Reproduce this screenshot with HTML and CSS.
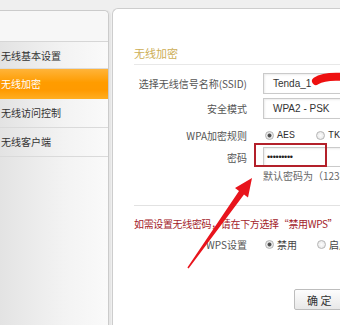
FILE: index.html
```html
<!DOCTYPE html>
<html lang="zh-CN">
<head>
    <meta charset="UTF-8">
    <title>无线加密</title>
    <link rel="stylesheet" href="styles.css">
</head>
<body>

<div class="page">
    <div class="sidebar">
        <div class="side-top"></div>
        <ul class="menu">
            <li>无线基本设置</li>
            <li class="current">无线加密</li>
            <li>无线访问控制</li>
            <li>无线客户端</li>
        </ul>
    </div>

    <div class="main">
        <h2 class="title">无线加密</h2>

        <div class="row">
            <label class="lbl">选择无线信号名称(SSID)</label>
            <div class="field"><span class="input">Tenda_1</span></div>
        </div>
        <div class="row">
            <label class="lbl">安全模式</label>
            <div class="field"><span class="input">WPA2 - PSK</span></div>
        </div>
        <div class="row row-radio">
            <label class="lbl">WPA加密规则</label>
            <div class="field">
                <span class="opt"><i class="radio on"></i><span class="latin">AES</span></span>
                <span class="opt"><i class="radio"></i><span class="latin">TKIP</span></span>
            </div>
        </div>
        <div class="row row-pwd">
            <label class="lbl">密码</label>
            <div class="field"><span class="input pwd">•••••••••</span></div>
        </div>
        <p class="hint">默认密码为（12345678）</p>

        <p class="warn">如需设置无线密码，请在下方选择“禁用WPS”</p>

        <div class="row row-wps">
            <label class="lbl">WPS设置</label>
            <div class="field">
                <span class="opt opt-wide"><i class="radio on"></i>禁用</span>
                <span class="opt"><i class="radio"></i>启用</span>
            </div>
        </div>

        <div class="actions">
            <button class="btn">确 定</button>
        </div>
    </div>
</div>

<!-- 截图上的红色标注 -->
<svg class="marks" width="340" height="325" viewBox="0 0 340 325">
    <path d="M316 81 C322 77, 331 76, 344 77" fill="none" stroke="#ee1010" stroke-width="8" stroke-linecap="round"/>
    <rect x="255" y="144" width="71" height="22" fill="none" stroke="#b3202a" stroke-width="2"/>
    <polygon points="252,178 248,197.5 244,194.5 188.6,268.4 187.4,267.6 239,191 235,188" fill="#e8141c"/>
</svg>

</body>
</html>
```

FILE: styles.css
```css
*{
    margin:0;
    padding:0;
    box-sizing: border-box;
}
html, body{
    overflow: hidden;
}
body{
    background: #efefef;
    font-family: "Noto Sans CJK SC", "Liberation Sans", sans-serif;
    font-size: 10px;
    color: #444;
}
li{
    list-style-type: none;
}
.page{
    display: flex;
    gap: 3px;
    width: 340px;
    height: 325px;
}

/* 左侧菜单 */
.sidebar{
    width: 109px;
    flex-shrink: 0;
    margin-top: 10px;
    background: linear-gradient(to right, #e3e3e3, #f3f3f3 60%, #fafafa);
    border: 1px solid #cbcbcb;
    border-left: 0;
    border-bottom: 0;
    border-radius: 0 5px 0 0;
    box-shadow: 2px 0 0 #e6e6e6;
}
.side-top{
    height: 31px;
    background: #f7f7f7;
    border-bottom: 1px solid #d6d6d6;
    border-radius: 0 5px 0 0;
}
.menu li{
    height: 29px;
    line-height: 28px;
    padding-left: 1px;
    color: #333;
    border-bottom: 1px solid #dadada;
    white-space: nowrap;
}
.menu li:first-child{
    height: 27px;
    line-height: 27px;
}
.menu li.current{
    height: 30px;
    line-height: 30px;
    color: #fff;
    border-bottom: 0;
    background: linear-gradient(#ffb43a, #ff9c00 45%, #ff9a00 70%, #ffae22);
}

/* 右侧表单 */
.main{
    flex: 1;
    margin-top: 8px;
    background: #fff;
    border: 1px solid #cdcdcd;
    border-right: 0;
    border-bottom: 0;
    border-radius: 6px 0 0 0;
    padding: 36px 0 0 21px;
    overflow: hidden;
    white-space: nowrap;
}
.title{
    font-size: 11px;
    font-weight: normal;
    line-height: 16px;
    color: #cdae55;
    padding-bottom: 3px;
    border-bottom: 1px solid #e8e8e8;
    margin-bottom: 8px;
}
.row{
    display: flex;
    align-items: center;
    height: 21px;
    margin-bottom: 4px;
}
.lbl{
    width: 113px;
    text-align: right;
    color: #555;
    flex-shrink: 0;
}
.field{
    margin-left: 16px;
    display: flex;
    align-items: center;
}
.input{
    display: block;
    width: 120px;
    height: 21px;
    line-height: 19px;
    padding-left: 9px;
    border: 1px solid #cacaca;
    box-shadow: inset 1px 1px 2px rgba(0,0,0,.08);
    font-family: "Liberation Sans", sans-serif;
    font-size: 10px;
    color: #333;
}
.row-radio{
    height: 24px;
    margin-bottom: 0;
}
.row-pwd{
    height: 20px;
    margin-bottom: 2px;
}
.pwd{
    height: 20px;
    padding-left: 3px;
    font-size: 9px;
    letter-spacing: -0.3px;
    color: #222;
}
.opt{
    display: flex;
    align-items: center;
    width: 51px;
    color: #444;
}
.opt-wide{
    width: 52px;
}
.radio{
    display: block;
    width: 9px;
    height: 9px;
    margin: 0 3px 0 2px;
    border: 1px solid #b5b5b5;
    border-radius: 50%;
    background: radial-gradient(#fdfdfd, #e2e2e2);
}
.radio.on{
    background: radial-gradient(#444 0, #555 1.6px, #eee 2.4px, #dcdcdc);
}
.latin{
    font-family: "Liberation Mono", monospace;
    font-size: 10px;
    color: #333;
}
.hint{
    margin-left: 129px;
    line-height: 14px;
    color: #666;
}
.warn{
    margin-top: 22px;
    padding-top: 11px;
    border-top: 1px solid #e2e2e2;
    line-height: 14px;
    letter-spacing: -0.35px;
    color: #a3222a;
    margin-bottom: 6px;
}
.row-wps{
    height: 14px;
}
.actions{
    margin-top: 38px;
    padding-left: 160px;
}
.btn{
    width: 70px;
    height: 21px;
    padding-left: 12px;
    text-align: left;
    font-family: "Noto Sans CJK SC", sans-serif;
    font-size: 11px;
    color: #333;
    border: 1px solid #bdbdbd;
    border-radius: 2px;
    background: linear-gradient(#fdfdfd, #e8e8e8);
}

/* 标注层 */
.marks{
    position: absolute;
    left: 0;
    top: 0;
    pointer-events: none;
}
```
